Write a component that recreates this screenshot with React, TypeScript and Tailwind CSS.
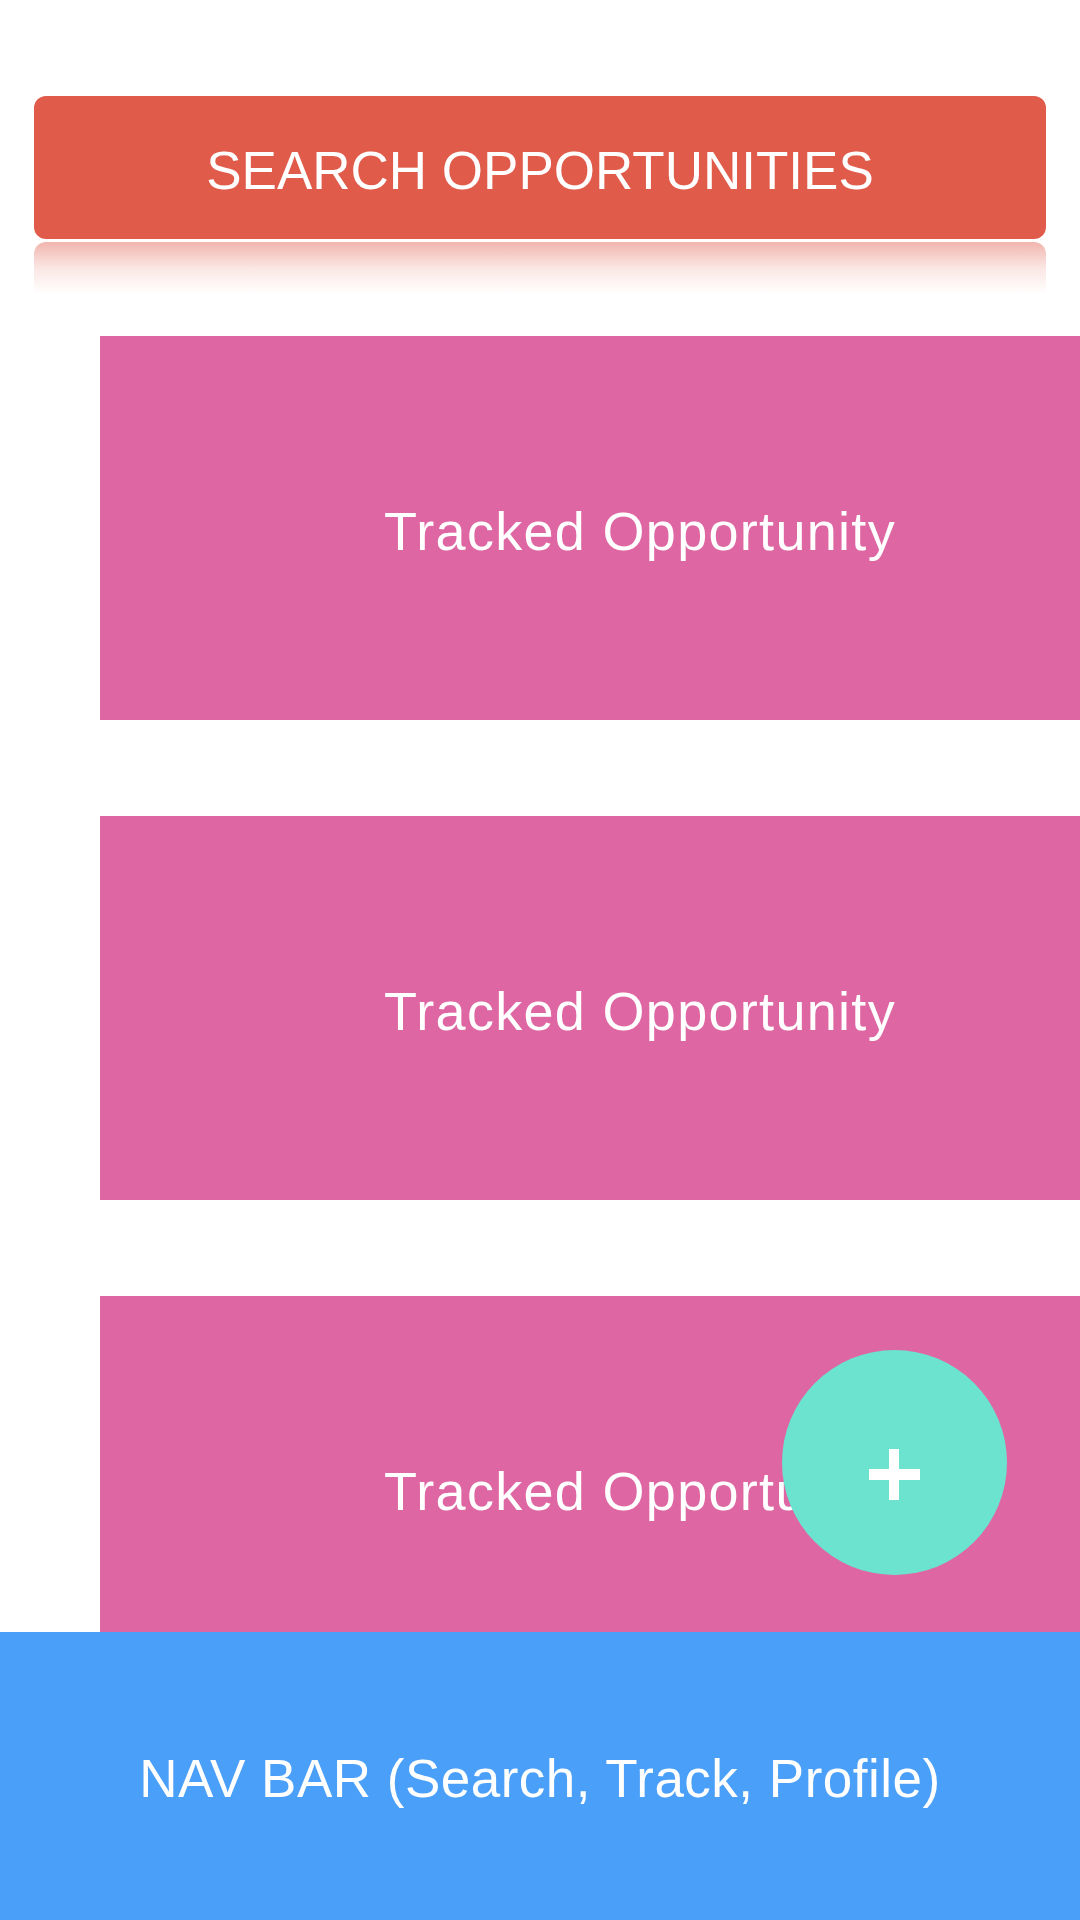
import React from "react";

function Card() {
  return (
    <div className="w-[1080px] h-[384px] shrink-0 bg-[#de67a3] flex items-center justify-center">
      <span className="text-white text-[54px] leading-none tracking-[1.3px] pt-[5px]">Tracked Opportunity</span>
    </div>
  );
}

export default function App() {
  return (
    <div
      className="relative w-[1080px] h-[1920px] overflow-hidden bg-white"
      style={{ fontFamily: '"Liberation Sans", Arial, Helvetica, sans-serif' }}
    >
      <div className="flex flex-col">
        <div className="mt-[96px] mx-[34px] h-[143px] rounded-[12px] bg-[#e05b4a] flex items-center justify-center">
          <span className="text-white text-[53px] leading-none pt-[5px]">SEARCH OPPORTUNITIES</span>
        </div>
        <div className="mt-[3px] mx-[34px] h-[52px] rounded-t-[12px] bg-gradient-to-b from-[#e05b4a]/45 via-[#e05b4a]/15 to-transparent" />
        <div className="mt-[42px] pl-[100px] flex flex-col gap-[96px]">
          <Card />
          <Card />
          <Card />
        </div>
      </div>

      <button className="absolute left-[782px] top-[1350px] w-[225px] h-[225px] rounded-full bg-[#6be3cf] flex items-center justify-center">
        <svg width="51" height="51" viewBox="0 0 51 51" className="mt-[24px]">
          <rect x="20" y="0" width="10" height="51" fill="#fff" />
          <rect x="0" y="20" width="51" height="11" fill="#fff" />
        </svg>
      </button>

      <nav className="absolute left-0 right-0 bottom-0 h-[288px] bg-[#4a9ff8] flex items-center justify-center">
        <span className="text-white text-[53px] leading-none tracking-[0.5px] pt-[5px]">NAV BAR (Search, Track, Profile)</span>
      </nav>
    </div>
  );
}
